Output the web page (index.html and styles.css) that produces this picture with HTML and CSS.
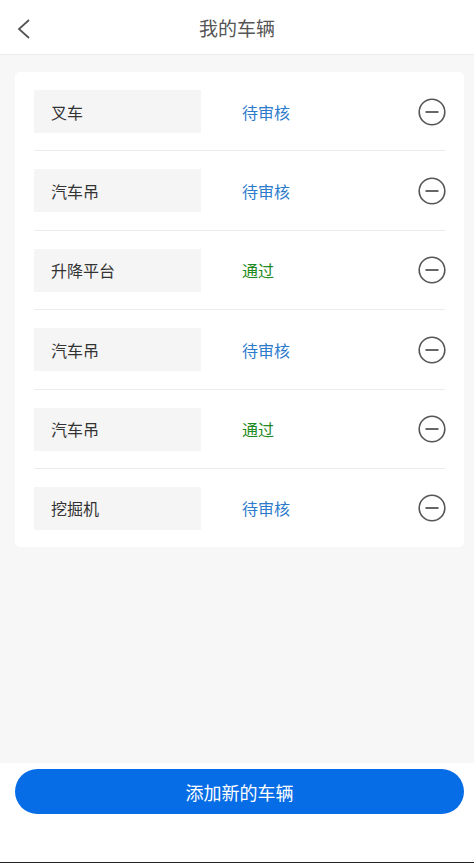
FILE: index.html
```html
<!DOCTYPE html>
<html>
<head>
    <meta charset="utf-8">
    <title>我的车辆</title>
    <link rel="stylesheet" href="styles.css">
</head>
<body>
    <div class="page">
        <div class="header">
            <svg class="back" width="16" height="22" viewBox="0 0 16 22">
                <path d="M13 2 L3 11 L13 20" fill="none" stroke="#555" stroke-width="1.8"/>
            </svg>
            <span class="title">我的车辆</span>
        </div>
        <div class="main">
            <div class="card">
                <div class="row">
                    <div class="name">叉车</div>
                    <div class="status pending">待审核</div>
                    <svg class="remove" width="30" height="30" viewBox="0 0 30 30"><circle cx="15" cy="15" r="12.8" fill="none" stroke="#555" stroke-width="1.6"/><line x1="8.5" y1="15" x2="21.5" y2="15" stroke="#555" stroke-width="1.8"/></svg>
                </div>
                <div class="row">
                    <div class="name">汽车吊</div>
                    <div class="status pending">待审核</div>
                    <svg class="remove" width="30" height="30" viewBox="0 0 30 30"><circle cx="15" cy="15" r="12.8" fill="none" stroke="#555" stroke-width="1.6"/><line x1="8.5" y1="15" x2="21.5" y2="15" stroke="#555" stroke-width="1.8"/></svg>
                </div>
                <div class="row">
                    <div class="name">升降平台</div>
                    <div class="status passed">通过</div>
                    <svg class="remove" width="30" height="30" viewBox="0 0 30 30"><circle cx="15" cy="15" r="12.8" fill="none" stroke="#555" stroke-width="1.6"/><line x1="8.5" y1="15" x2="21.5" y2="15" stroke="#555" stroke-width="1.8"/></svg>
                </div>
                <div class="row">
                    <div class="name">汽车吊</div>
                    <div class="status pending">待审核</div>
                    <svg class="remove" width="30" height="30" viewBox="0 0 30 30"><circle cx="15" cy="15" r="12.8" fill="none" stroke="#555" stroke-width="1.6"/><line x1="8.5" y1="15" x2="21.5" y2="15" stroke="#555" stroke-width="1.8"/></svg>
                </div>
                <div class="row">
                    <div class="name">汽车吊</div>
                    <div class="status passed">通过</div>
                    <svg class="remove" width="30" height="30" viewBox="0 0 30 30"><circle cx="15" cy="15" r="12.8" fill="none" stroke="#555" stroke-width="1.6"/><line x1="8.5" y1="15" x2="21.5" y2="15" stroke="#555" stroke-width="1.8"/></svg>
                </div>
                <div class="row">
                    <div class="name">挖掘机</div>
                    <div class="status pending">待审核</div>
                    <svg class="remove" width="30" height="30" viewBox="0 0 30 30"><circle cx="15" cy="15" r="12.8" fill="none" stroke="#555" stroke-width="1.6"/><line x1="8.5" y1="15" x2="21.5" y2="15" stroke="#555" stroke-width="1.8"/></svg>
                </div>
            </div>
        </div>
        <div class="footer">
            <button class="addButton">添加新的车辆</button>
        </div>
    </div>
</body>
</html>
```

FILE: styles.css
```css
body {
    margin: 0;
    font-family: "Noto Sans CJK SC", "Noto Sans", sans-serif;
}

.page {
    height: 863px;
    display: flex;
    flex-direction: column;
    box-sizing: border-box;
    border-bottom: 1px solid #222;
}

.header {
    height: 54px;
    border-bottom: 1px solid #ebebeb;
    background-color: white;
    display: flex;
    align-items: center;
    justify-content: center;
    position: relative;
}

.back {
    position: absolute;
    left: 16px;
    top: 18px;
}

.title {
    font-size: 19px;
    color: #555;
}

.main {
    flex: 1;
    background-color: #f7f7f7;
    padding: 17px 10px 0 15px;
}

.card {
    background-color: white;
    border-radius: 5px;
    padding: 0 19px;
}

.row {
    display: flex;
    align-items: center;
    padding: 18px 0 17.4px;
    border-bottom: 1px solid #ececec;
}

.row:last-child {
    border-bottom: none;
    padding-bottom: 17px;
}

.name {
    width: 150px;
    height: 43px;
    background-color: #f5f5f5;
    padding-left: 17px;
    display: flex;
    align-items: center;
    font-size: 16px;
    color: #333;
}

.status {
    margin-left: 41px;
    font-size: 16px;
    flex: 1;
}

.pending {
    color: #2b7acb;
}

.passed {
    color: #1f8a24;
}

.remove {
    margin-right: -2px;
}

.footer {
    height: 99px;
    background-color: white;
    padding: 6px 10px 0 15px;
    box-sizing: border-box;
}

.addButton {
    width: 449px;
    height: 45px;
    border: none;
    border-radius: 23px;
    background-color: #066de6;
    color: white;
    font-size: 18px;
    font-family: "Noto Sans CJK SC", "Noto Sans", sans-serif;
}
```
